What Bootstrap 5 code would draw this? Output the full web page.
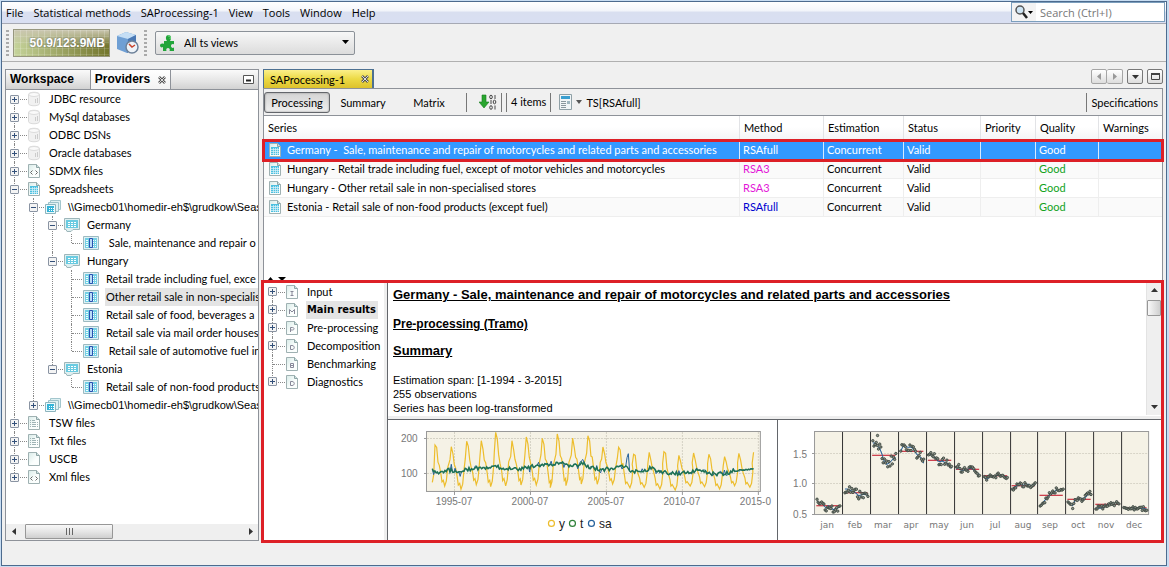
<!DOCTYPE html>
<html lang="en">
<head>
<meta charset="utf-8">
<meta name="viewport" content="width=device-width, initial-scale=1">
<title>SAProcessing-1</title>
<link href="https://cdn.jsdelivr.net/npm/bootstrap@5.3.0/dist/css/bootstrap.min.css" rel="stylesheet">
<style>
:root{--ui:Lato,"DejaVu Sans Condensed",sans-serif;--edge:#8e9299;--face:#f0f0f0;--mark:#dd2027}
body{font:11px/18px var(--ui);color:#000;background:#c8ddf2;padding:1px 2px 1px 1px;min-height:100vh;display:flex}
button{font:inherit;color:inherit;background:none;border:0;padding:0;line-height:1}
svg{display:block;flex:none}
a{color:inherit;text-decoration:none}
.app-window{border:1px solid #4d6b8e;background:var(--face);min-width:0}
/* menu */
.menu-bar{height:22px;background:linear-gradient(#fff 0,#f4f6fb 40%,#d9dff0 50%,#d9dff2 100%);border-bottom:1px solid #a6a9b4;padding-left:4px}
.menu-bar nav{font:11px/20px "Open Sans",sans-serif;gap:10px;padding-top:1px}
.search-box{width:154px;height:20px;border:1px solid #7b9ebd;background:#fff;margin-right:1px}
.search-box input{border:0;outline:0;font:11px "Open Sans",sans-serif;width:120px;height:16px;padding:0 0 0 4px}
.search-box input::placeholder{color:#777;opacity:1}
.search-box .lens{background:#f3f3f3;width:24px;padding-left:2px}
/* tool bar */
.tool-bar{height:38px;border-bottom:1px solid #b0b0b0;padding:0 4px}
.grip{width:3px;height:26px;background:repeating-linear-gradient(#aaa 0 2px,transparent 2px 4px)}
.memory{width:97px;height:28px;border:1px solid #97977f;color:#fff;font:bold 12px/26px "Liberation Sans",sans-serif;text-align:right;padding-right:4px;text-shadow:0 0 2px #555;
background:repeating-linear-gradient(90deg,#fff3 0 1px,transparent 1px 6px),repeating-linear-gradient(#fff2 0 1px,transparent 1px 6px),linear-gradient(#cac6b0,#cac6b000 60%),linear-gradient(90deg,#c5d39a,#73762c)}
.view-box{width:200px;height:24px;border:1px solid #8b9198;border-radius:2px;background:linear-gradient(#f7f7f7,#dcdcdc)}
.view-box select{appearance:none;border:0;background:none;font:11px var(--ui);color:#000;padding:0 0 0 8px;outline:0}
/* docks */
.docks{padding:7px 3px 0}
.dock-left{width:254px;border:1px solid var(--edge);background:#fff}
.tab-strip{height:20px;background:linear-gradient(#fafafa,#e4e4e4 60%,#d2d2d2);border-bottom:1px solid var(--edge);font:bold 12px/19px "Liberation Sans",sans-serif}
.tab-strip .nav-tab{border-right:1px solid var(--edge);padding:0 4px}
.tab-strip .nav-tab.on{background:linear-gradient(#fff,#f2f2f2)}
.doc-tab{width:111px;height:19px;border:1px solid #4d7091;border-bottom:0;border-right-width:2px;background:linear-gradient(#fbf08a,#ecd944 50%,#ddc22c);padding:0 3px 0 6px;line-height:19px}
.nav-btn{height:15px;width:16px;border:1px solid #777;border-radius:2px;background:linear-gradient(#fff,#ddd)}
.nav-btn.off{border-color:#a5a5a5}
.doc-pane{border:1px solid var(--edge);border-bottom:0;background:#fff}
.doc-tools{height:27px;background:var(--face);border-bottom:1px solid var(--edge)}
.doc-tools button.tg{width:66px;height:21px;border-radius:3px}
.doc-tools button.tg.on{border:1px solid #63666b;background:linear-gradient(#d4d4d4,#efefef);box-shadow:inset 0 0 2px #888}
.rule{width:1px;height:19px;background:#777}
/* tree */
.tree,.tree ul{list-style:none;margin:0;padding:0}
.tree ul{margin-left:19px}
.tree li{position:relative}
.tree li::before{content:"";position:absolute;left:4px;top:0;bottom:0;border-left:1px dotted #888}
.tree>li:first-child::before{top:9px}
.tree li:last-child::before{bottom:auto;height:9px}
.node{position:relative;display:flex;align-items:center;height:18px;white-space:nowrap}
.node::before{content:"";position:absolute;left:5px;width:12px;top:9px;border-top:1px dotted #888}
.node .ex{width:9px;height:9px;border:1px solid #8a94a3;border-radius:1px;position:relative;flex:none;background:linear-gradient(90deg,#33507a,#33507a) center/5px 1px no-repeat,#f4f4f4}
.node .ex.plus{background:linear-gradient(#33507a,#33507a) center/5px 1px no-repeat,linear-gradient(#33507a,#33507a) center/1px 5px no-repeat,#f4f4f4}
.node .lf{width:9px;flex:none}
.node svg{margin-left:7px;position:relative}
.node .tx{margin-left:6px;padding:0 1px;flex:1 0 auto}
.node .tx.sel{background:#e4e4e4}
.node .tx.fw-bold{font-family:"DejaVu Sans Condensed",sans-serif;padding-right:2px}
.node .tx.pre{white-space:pre}
.node .tx.path{font-family:"Liberation Sans",sans-serif;padding-right:0}
/* scroll bars */
.sb{background:#efefef}
.sb-h{height:16px}
.sb-v{width:15px;border-left:1px solid #e3e3e3}
.sb button{display:flex;align-items:center;justify-content:center;width:15px;height:15px}
.thumb{border:1px solid #979797;border-radius:1px;background:linear-gradient(#f8f8f8,#e6e6e6 50%,#cfcfcf)}
.sb-h .thumb{width:88px;height:15px;margin-left:4px}
.sb-v .thumb{height:16px;margin-top:2px;background:linear-gradient(90deg,#f8f8f8,#cfcfcf)}
/* series table */
.series{table-layout:fixed;width:100%;margin:0;border-collapse:separate;border-spacing:0;line-height:18px}
.series th{font-weight:400;height:25px;padding:0 4px;background:linear-gradient(#fff 45%,#f3f4f6);border-right:1px solid #e2e3e6;border-bottom:1px solid #d8d8d8;white-space:nowrap}
.series td{height:19px;padding:0 4px 0 3px;border-right:1px solid #eee;border-bottom:1px solid #eee;white-space:nowrap}
.series th:last-child,.series td:last-child{border-right:0}
.series tr:nth-child(even) td{background:#fafafa}
.series tr.cur td{background:#3399ff;color:#fff;border-color:#3399ff #d6eaff #3399ff}
.series tr.cur{outline:3px solid var(--mark);outline-offset:-1px;position:relative}
.series svg{margin:0 4px 0 0}
.mg{color:#e316d8}.bl{color:#0000d0}.gn{color:#12a31c}
/* result box */
.result-box{border:3px solid var(--mark);margin:0 -2px -2px -3px;background:#fff}
.result-tree{width:124px;border-right:1px solid #63666b;box-shadow:inset -3px 0 #eee}
.report{padding:4px 5px 0;font:11px/14px "Liberation Sans",sans-serif}
.report h1,.report h2{font-weight:700;text-decoration:underline;line-height:16px}
.report h1{font-size:13px;margin:0 0 13px}
.report h2{font-size:12px;margin:0 0 11px}
.report h2.big{font-size:13px;margin-bottom:14px}
.charts{border-top:1px solid #63666b;box-shadow:0 -3px #eee}
.charts>div{flex:1 1 0;min-width:0}
.charts>div:first-child{flex-grow:1.015}
.charts>div+div{border-left:1px solid #63666b}
.charts svg{width:100%;height:auto}
.ax{font:10px "Liberation Sans",sans-serif;fill:#777}
.mo{font:9px "DejaVu Sans",sans-serif;fill:#777;text-anchor:middle}
.lg{font:12px "Liberation Sans",sans-serif;fill:#222}
.status{height:24px}
</style>
</head>
<body>
<svg width="0" height="0" class="position-absolute" aria-hidden="true">
<defs>
<linearGradient id="pg" x2="1" y2="1"><stop offset="0" stop-color="#d8ebe8"/><stop offset=".6" stop-color="#fbfefd"/></linearGradient>
<symbol id="page" viewBox="0 0 16 16"><path d="M2.500 1.500h8l3 3v10h-11z" fill="url(#pg)" stroke="#9fb1b2"/><path d="M10.500 1.500v3h3" fill="#cfe4e2" stroke="#8fa5a6"/></symbol>
<symbol id="db" viewBox="0 0 16 16"><path d="M2.500 3.500c0-3 11-3 11 0v9c0 3-11 3-11 0z" fill="#f1f1f1" stroke="#dadada"/><ellipse cx="8" cy="3.500" rx="5" ry="2" fill="#fafafa" stroke="#dcdcdc"/><path d="M9.500 8v4M11.500 7v5" stroke="#ccc"/></symbol>
<symbol id="xml" viewBox="0 0 16 16"><use href="#page"/><path d="M6.500 7.500l-2 2 2 2M9.500 7.500l2 2-2 2" fill="none" stroke="#666"/></symbol>
<symbol id="txt" viewBox="0 0 16 16"><use href="#page"/><path d="M4 5.500h5M4 7.500h8M4 9.500h8M4 11.500h8" stroke="#9fb3b5" stroke-dasharray="1 1 4 1"/></symbol>
<symbol id="sheet" viewBox="0 0 16 16"><use href="#page"/><path d="M4 5h8v8H4z" fill="#4cc0e0"/><path d="M4 7.500h8M4 9.500h8M4 11.500h8M6.500 6v7M8.500 6v7M10.500 6v7" stroke="#fff" stroke-width=".7" opacity=".8"/></symbol>
<symbol id="books" viewBox="0 0 16 16"><path d="M5.500 1.500h10v9h-10z" fill="#dff1f3" stroke="#a3c6cd"/><path d="M3.500 3.500h10v9h-10z" fill="#dff1f3" stroke="#9dc2ca"/><path d="M.5 5.500h10v9H.5z" fill="#eafafd" stroke="#8db4bd"/><path d="M2 7h7v6H2z" fill="#35b4d8"/><path d="M4 9h1v1H4zM6 9h1v1H6zM4 11h1v1H4zM6 11h1v1H6zM8 9h1v1H8zM8 11h1v1H8z" fill="#fff"/></symbol>
<symbol id="tab" viewBox="0 0 16 16"><path d="M.5 1.500h15v11H9l-2 2H3l-1-2H.5z" fill="#dfeff0" stroke="#9db6ba"/><path d="M2 3h12v8H2z" fill="#6acbe1"/><path d="M4 5.500h9M4 7.500h9M4 9.500h9" stroke="#fff" stroke-dasharray="2 1"/></symbol>
<symbol id="ser" viewBox="0 0 16 16"><path d="M.5 1.500h15v13H.5z" fill="#dff0f4" stroke="#9cbac1"/><path d="M2 3h12v10H2z" fill="#74d0e4"/><path d="M3 5.500h10M3 7.500h10M3 9.500h10M3 11.500h10" stroke="#f4ffff" stroke-dasharray="2 1"/><path d="M6.500 3.500h3v9h-3z" fill="#b9dcf6" stroke="#2a50b0"/></symbol>
<symbol id="pI" viewBox="0 0 16 16"><use href="#page"/><path d="M6.500 7.500h3M8 7.500v4M6.500 11.500h3" stroke="#889" fill="none"/></symbol>
<symbol id="pM" viewBox="0 0 16 16"><use href="#page"/><path d="M5.500 12V7.500L8 10l2.500-2.500V12" stroke="#889" fill="none"/></symbol>
<symbol id="pP" viewBox="0 0 16 16"><use href="#page"/><path d="M6.500 12V7.500h2c2 0 2 2.500 0 2.500h-2" stroke="#889" fill="none"/></symbol>
<symbol id="pD" viewBox="0 0 16 16"><use href="#page"/><path d="M6.500 7.500H8c3 0 3 4 0 4H6.500z" stroke="#889" fill="none"/></symbol>
<symbol id="pB" viewBox="0 0 16 16"><use href="#page"/><path d="M6.500 7.500h3v4h-3zM6.500 9.500h3" stroke="#889" fill="none"/></symbol>
<symbol id="cross" viewBox="0 0 8 8"><path d="M1 1l6 6M7 1L1 7" stroke="#555" stroke-width="2.600"/><path d="M1 1l6 6M7 1L1 7" stroke="#fff" stroke-width=".8"/></symbol>
</defs></svg>

<div class="app-window d-flex flex-column flex-grow-1">
  <header class="menu-bar d-flex justify-content-between">
    <nav class="d-flex" aria-label="Main menu"><a href="#">File</a><a href="#">Statistical methods</a><a href="#">SAProcessing-1</a><a href="#">View</a><a href="#">Tools</a><a href="#">Window</a><a href="#">Help</a></nav>
    <form class="search-box d-flex align-items-center" role="search">
      <span class="lens d-flex align-items-center h-100"><svg width="20" height="16" viewBox="0 0 20 16" aria-hidden="true"><circle cx="6" cy="6" r="4" fill="#cfe6f5" stroke="#555" stroke-width="1.500"/><path d="M9 9l4 5" stroke="#222" stroke-width="2.500"/><path d="M14 7h5l-2.500 3z"/></svg></span>
      <input type="text" placeholder="Search (Ctrl+I)" aria-label="Search">
    </form>
  </header>

  <div class="tool-bar d-flex align-items-center">
    <span class="grip"></span>
    <button class="memory ms-1" type="button">50.9/123.9MB</button>
    <button class="ms-1" type="button" aria-label="Profile"><svg width="26" height="26" viewBox="0 0 26 26" aria-hidden="true"><path d="M3 6l9-4 10 3v12l-9 6-10-4z" fill="#6f9fd4"/><path d="M3 6l9-4 10 3-8 4z" fill="#c5def5"/><path d="M14 9l8-4v12l-9 6z" fill="#4a78b4"/><circle cx="18" cy="17" r="6" fill="#eef3f8" stroke="#6d8199" stroke-width="1.500"/><path d="M15 14l3 3 3-2" fill="none" stroke="#c9442c" stroke-width="1.500"/></svg></button>
    <span class="grip ms-1 me-2"></span>
    <label class="view-box d-flex align-items-center">
      <svg class="ms-1" width="16" height="16" viewBox="0 0 16 16" aria-hidden="true"><path d="M4 6h3c-2-3-1-6 1.500-6S12 3 10 6h4v3.500c-1.500-1-3 0-3 1.500s1.500 2.500 3 1.500V16H9.500c1-2-.5-3-1.500-3s-2.500 1-1.500 3H3v-4c-1.500 1-3 0-3-1.500S2 8 4 9z" fill="#22a53a"/><path d="M8 1c2-.5 3 1 2 3" fill="none" stroke="#7be08a"/></svg>
      <select class="flex-grow-1" aria-label="View"><option>All ts views</option></select>
      <svg class="me-1" width="9" height="5" viewBox="0 0 9 5" aria-hidden="true"><path d="M1 0h7L4.500 4z"/></svg>
    </label>
  </div>

  <main class="docks d-flex flex-grow-1 gap-1">
    <aside class="dock-left d-flex flex-column flex-shrink-0 overflow-hidden">
      <div class="tab-strip d-flex">
        <div class="nav-tab pe-3"><a href="#">Workspace</a></div>
        <div class="nav-tab on d-flex align-items-center gap-1"><a href="#" class="me-1">Providers</a><button type="button" aria-label="Close Providers"><svg width="8" height="8"><use href="#cross"/></svg></button></div>
        <button type="button" class="ms-auto me-1 my-auto" aria-label="Minimise"><svg width="11" height="9"><path d="M.5.500h10v8H.5z" fill="#fff" stroke="#555"/><path d="M3 5.500h5" stroke="#222" stroke-width="2"/></svg></button>
      </div>
      <ul class="tree ps-1 flex-grow-1">
        <li><div class="node"><button class="ex plus" aria-label="Expand"></button><svg width="16" height="16"><use href="#db"/></svg><span class="tx">JDBC resource</span></div></li>
        <li><div class="node"><button class="ex plus" aria-label="Expand"></button><svg width="16" height="16"><use href="#db"/></svg><span class="tx">MySql databases</span></div></li>
        <li><div class="node"><button class="ex plus" aria-label="Expand"></button><svg width="16" height="16"><use href="#db"/></svg><span class="tx">ODBC DSNs</span></div></li>
        <li><div class="node"><button class="ex plus" aria-label="Expand"></button><svg width="16" height="16"><use href="#db"/></svg><span class="tx">Oracle databases</span></div></li>
        <li><div class="node"><button class="ex plus" aria-label="Expand"></button><svg width="16" height="16"><use href="#xml"/></svg><span class="tx">SDMX files</span></div></li>
        <li><div class="node"><button class="ex" aria-label="Collapse"></button><svg width="16" height="16"><use href="#sheet"/></svg><span class="tx">Spreadsheets</span></div>
          <ul>
            <li><div class="node"><button class="ex" aria-label="Collapse"></button><svg width="16" height="16"><use href="#books"/></svg><span class="tx path">\\Gimecb01\homedir-eh$\grudkow\Seas</span></div>
              <ul>
                <li><div class="node"><button class="ex" aria-label="Collapse"></button><svg width="16" height="16"><use href="#tab"/></svg><span class="tx">Germany</span></div>
                  <ul><li><div class="node"><span class="lf"></span><svg width="16" height="16"><use href="#ser"/></svg><span class="tx pre"> Sale, maintenance and repair o</span></div></li></ul></li>
                <li><div class="node"><button class="ex" aria-label="Collapse"></button><svg width="16" height="16"><use href="#tab"/></svg><span class="tx">Hungary</span></div>
                  <ul>
                    <li><div class="node"><span class="lf"></span><svg width="16" height="16"><use href="#ser"/></svg><span class="tx">Retail trade including fuel, exce</span></div></li>
                    <li><div class="node"><span class="lf"></span><svg width="16" height="16"><use href="#ser"/></svg><span class="tx sel">Other retail sale in non-specialis</span></div></li>
                    <li><div class="node"><span class="lf"></span><svg width="16" height="16"><use href="#ser"/></svg><span class="tx">Retail sale of food, beverages a</span></div></li>
                    <li><div class="node"><span class="lf"></span><svg width="16" height="16"><use href="#ser"/></svg><span class="tx">Retail sale via mail order houses</span></div></li>
                    <li><div class="node"><span class="lf"></span><svg width="16" height="16"><use href="#ser"/></svg><span class="tx pre"> Retail sale of automotive fuel in</span></div></li>
                  </ul></li>
                <li><div class="node"><button class="ex" aria-label="Collapse"></button><svg width="16" height="16"><use href="#tab"/></svg><span class="tx">Estonia</span></div>
                  <ul><li><div class="node"><span class="lf"></span><svg width="16" height="16"><use href="#ser"/></svg><span class="tx">Retail sale of non-food products</span></div></li></ul></li>
              </ul></li>
            <li><div class="node"><button class="ex plus" aria-label="Expand"></button><svg width="16" height="16"><use href="#books"/></svg><span class="tx path">\\Gimecb01\homedir-eh$\grudkow\Seas</span></div></li>
          </ul></li>
        <li><div class="node"><button class="ex plus" aria-label="Expand"></button><svg width="16" height="16"><use href="#txt"/></svg><span class="tx">TSW files</span></div></li>
        <li><div class="node"><button class="ex plus" aria-label="Expand"></button><svg width="16" height="16"><use href="#txt"/></svg><span class="tx">Txt files</span></div></li>
        <li><div class="node"><button class="ex plus" aria-label="Expand"></button><svg width="16" height="16"><use href="#page"/></svg><span class="tx">USCB</span></div></li>
        <li><div class="node"><button class="ex plus" aria-label="Expand"></button><svg width="16" height="16"><use href="#xml"/></svg><span class="tx">Xml files</span></div></li>
      </ul>
      <div class="sb sb-h d-flex">
        <button type="button" aria-label="Scroll left"><svg width="4" height="7"><path d="M4 0v7L0 3.500z" fill="#333"/></svg></button>
        <div class="thumb d-flex align-items-center justify-content-center"><svg width="9" height="7"><path d="M1.500 0v7M4.500 0v7M7.500 0v7" stroke="#666"/></svg></div>
        <button type="button" class="ms-auto" aria-label="Scroll right"><svg width="4" height="7"><path d="M0 0v7l4-3.500z" fill="#333"/></svg></button>
      </div>
    </aside>

    <section class="d-flex flex-column flex-grow-1" style="min-width:0">
      <div class="d-flex justify-content-between">
        <div class="doc-tab d-flex align-items-center justify-content-between"><a href="#">SAProcessing-1</a><button type="button" aria-label="Close SAProcessing-1"><svg width="8" height="8"><use href="#cross"/></svg></button></div>
        <div class="d-flex gap-1">
          <div class="d-flex">
            <button class="nav-btn off d-flex align-items-center justify-content-center" aria-label="Previous"><svg width="4" height="7"><path d="M4 0v7L0 3.500z" fill="#999"/></svg></button>
            <button class="nav-btn off border-start-0 d-flex align-items-center justify-content-center" aria-label="Next"><svg width="4" height="7"><path d="M0 0v7l4-3.500z" fill="#999"/></svg></button>
          </div>
          <button class="nav-btn d-flex align-items-center justify-content-center" aria-label="Documents"><svg width="7" height="4"><path d="M0 0h7L3.500 4z" fill="#333"/></svg></button>
          <button class="nav-btn d-flex align-items-center justify-content-center" aria-label="Maximise"><svg width="9" height="7"><path d="M.5 1h8v5.500h-8z" fill="none" stroke="#444"/><path d="M0 1h9" stroke="#444" stroke-width="2"/></svg></button>
        </div>
      </div>
      <div class="doc-pane d-flex flex-column flex-grow-1">
        <div class="doc-tools d-flex align-items-center">
          <button class="tg on" type="button">Processing</button>
          <button class="tg" type="button">Summary</button>
          <button class="tg" type="button">Matrix</button>
          <span class="rule ms-1 me-2"></span>
          <button class="ms-1" type="button" aria-label="Refresh"><svg width="18" height="16" viewBox="0 0 18 16"><path d="M3 1h4v7h3l-5 6-5-6h3z" fill="#2aa52f" stroke="#157d1c" stroke-width=".6"/><g fill="none" stroke="#333" stroke-width=".9"><ellipse cx="12" cy="3" rx="1.300" ry="1.800"/><path d="M16 1v4M12 6v4M16 11.500v4"/><ellipse cx="15.500" cy="8" rx="1.300" ry="1.800"/><ellipse cx="12" cy="13.500" rx="1.300" ry="1.800"/></g></svg></button>
          <span class="rule ms-1"></span><span class="rule ms-1 me-1"></span>
          <span>4 items</span><span class="rule ms-1 me-2"></span>
          <svg width="13" height="16" viewBox="0 0 13 16" aria-hidden="true"><path d="M.5.500h12v15H.5z" fill="#f1f5f6" stroke="#8fa0a6"/><path d="M2 2h9v3H2z" fill="#3b9fd0"/><path d="M2 7.500h5M2 9.500h5M2 11.500h5M2 13.500h5" stroke="#8a979d"/><path d="M8 7h3v3H8z" fill="#9fb6bf"/></svg>
          <button class="ms-1 d-flex align-items-center gap-1" type="button"><svg width="6" height="4"><path d="M0 0h6L3 4z" fill="#555"/></svg>TS[RSAfull]</button>
          <span class="rule ms-auto me-1"></span><button class="me-1" type="button">Specifications</button>
        </div>
        <table class="series">
          <colgroup><col><col width="84"><col width="80"><col width="77"><col width="55"><col width="63"><col width="63"></colgroup>
          <thead><tr><th>Series</th><th>Method</th><th>Estimation</th><th>Status</th><th>Priority</th><th>Quality</th><th>Warnings</th></tr></thead>
          <tbody>
            <tr class="cur"><td><div class="d-flex align-items-center"><svg width="16" height="16"><use href="#sheet"/></svg>Germany - &nbsp;Sale, maintenance and repair of motorcycles and related parts and accessories</div></td><td>RSAfull</td><td>Concurrent</td><td>Valid</td><td></td><td>Good</td><td></td></tr>
            <tr><td><div class="d-flex align-items-center"><svg width="16" height="16"><use href="#sheet"/></svg>Hungary - Retail trade including fuel, except of motor vehicles and motorcycles</div></td><td class="mg">RSA3</td><td>Concurrent</td><td>Valid</td><td></td><td class="gn">Good</td><td></td></tr>
            <tr><td><div class="d-flex align-items-center"><svg width="16" height="16"><use href="#sheet"/></svg>Hungary - Other retail sale in non-specialised stores</div></td><td class="mg">RSA3</td><td>Concurrent</td><td>Valid</td><td></td><td class="gn">Good</td><td></td></tr>
            <tr><td><div class="d-flex align-items-center"><svg width="16" height="16"><use href="#sheet"/></svg>Estonia - Retail sale of non-food products (except fuel)</div></td><td class="bl">RSAfull</td><td>Concurrent</td><td>Valid</td><td></td><td class="gn">Good</td><td></td></tr>
          </tbody>
        </table>
        <svg class="mt-auto ms-1" width="20" height="3" aria-hidden="true"><path d="M0 3l2.500-3L5 3zM10 0h8l-4 4z"/></svg>
        <div class="result-box d-flex">
          <ul class="tree result-tree flex-shrink-0 ps-1">
            <li><div class="node"><button class="ex plus" aria-label="Expand"></button><svg width="16" height="16"><use href="#pI"/></svg><span class="tx">Input</span></div></li>
            <li><div class="node"><button class="ex plus" aria-label="Expand"></button><svg width="16" height="16"><use href="#pM"/></svg><span class="tx sel fw-bold flex-grow-0">Main results</span></div></li>
            <li><div class="node"><button class="ex plus" aria-label="Expand"></button><svg width="16" height="16"><use href="#pP"/></svg><span class="tx">Pre-processing</span></div></li>
            <li><div class="node"><button class="ex plus" aria-label="Expand"></button><svg width="16" height="16"><use href="#pD"/></svg><span class="tx">Decomposition</span></div></li>
            <li><div class="node"><span class="lf"></span><svg width="16" height="16"><use href="#pB"/></svg><span class="tx">Benchmarking</span></div></li>
            <li><div class="node"><button class="ex plus" aria-label="Expand"></button><svg width="16" height="16"><use href="#pD"/></svg><span class="tx">Diagnostics</span></div></li>
          </ul>
          <div class="flex-grow-1 d-flex flex-column" style="min-width:0">
            <div class="d-flex flex-grow-1 pb-1">
              <article class="report flex-grow-1">
                <h1>Germany - Sale, maintenance and repair of motorcycles and related parts and accessories</h1>
                <h2>Pre-processing (Tramo)</h2>
                <h2 class="big">Summary</h2>
                <p class="mb-0">Estimation span: [1-1994 - 3-2015]<br>255 observations<br>Series has been log-transformed</p>
              </article>
              <div class="sb sb-v d-flex flex-column">
                <button type="button" aria-label="Scroll up"><svg width="7" height="4"><path d="M0 4h7L3.500 0z" fill="#333"/></svg></button>
                <div class="thumb"></div>
                <button type="button" class="mt-auto" aria-label="Scroll down"><svg width="7" height="4"><path d="M0 0h7L3.500 4z" fill="#333"/></svg></button>
              </div>
            </div>
            <div class="charts d-flex">
              <div><svg id="lines" viewBox="0 0 389 120" role="img" aria-label="Series y, t and sa"></svg></div>
              <div><svg id="months" viewBox="0 0 383 120" role="img" aria-label="Seasonal component by month"></svg></div>
            </div>
          </div>
        </div>
      </div>
    </section>
  </main>
  <footer class="status"></footer>
</div>

<script>
// small repeatable noise in -1..1
const noise = n => { const v = Math.sin(n * 127.1 + 3) * 43758.5; return (v - Math.floor(v)) * 2 - 1; };
const lerp = (pts, x) => { for (let i = 1; i < pts.length; i++) if (x <= pts[i][0]) { const [a, b] = pts[i - 1], [c, d] = pts[i]; return b + (d - b) * (x - a) / (c - a); } return pts[pts.length - 1][1]; };

// time series chart: x is month position, y is plot height, both in thirds of a unit
(() => {
  const X = x => (x / 3).toFixed(1), Y = y => (y / 3 - 5).toFixed(1);
  const peaks = [[141,90],[190,95],[236,79],[280,77],[323,52],[372,77],[415,66],[463,70],[508,57],[554,69],[600,62],[645,96],[692,97],[737,118],[784,112],[828,110],[873,121],[917,114],[963,118],[1010,125],[1053,115],[1097,112]];
  const lows = [[170,213],[219,223],[265,209],[308,215],[353,213],[399,210],[445,210],[487,218],[534,212],[580,207],[628,208],[674,207],[726,218],[769,217],[816,222],[862,225],[907,213],[950,215],[995,222],[1040,212],[1086,217]];
  const y = [[133,202],[137,180]];
  peaks.forEach(([px, py], i) => {
    y.push([px, py]);
    const l = lows[i]; if (!l) return;
    const h = l[1] - py;
    y.push([px + 5, py + h * (.12 + .1 * noise(i))], [px + 9, py + h * .42], [px + 13, py + h * (.5 + .1 * noise(i + 40))], [px + 18, py + h * .72], [px + 21, py + h * .9], [px + 25, py + h * .86], l, [l[0] + 5, l[1] - h * .12], [l[0] + 9, l[1] - h * .45], [peaks[i + 1][0] - 4, (l[1] + peaks[i + 1][1]) / 2 - 20]);
  });
  const t = [[133,165],[150,172],[180,165],[210,168],[260,160],[320,155],[350,160],[400,162],[430,155],[470,148],[520,145],[545,153],[585,146],[610,158],[640,165],[680,160],[718,152],[728,168],[760,172],[790,158],[820,172],[860,176],[900,173],[940,163],[960,176],[1000,177],[1040,168],[1097,161]];
  const tl = [], sl = [];
  for (let i = 0; i < 255; i++) {
    const x = 133 + i * 3.795, b = lerp(t, x), n = noise(i);
    const calm = x > 1040 ? .3 : 1;
    tl.push([x, b + n * 6 * calm]);
    let s = b + n * 6 * calm + (Math.abs(noise(i + 500)) > .85 ? noise(i + 700) * 14 * calm : 0);
    if (x > 714 && x < 724) s = 105 + Math.abs(x - 720) * 9;
    if (x > 576 && x < 588) s = 130 + (588 - x);
    sl.push([x, s]);
  }
  const poly = (a, c, w) => `<polyline points="${a.map(p => X(p[0]) + ',' + Y(p[1])).join(' ')}" fill="none" stroke="${c}" stroke-width="${w}"/>`;
  let s = '<rect x="38.500" y="11.500" width="334" height="60" fill="#f5f2e6" stroke="#999"/><g stroke="#d4d1c4" stroke-dasharray="2 1">';
  [66.5,142.5,218.5,294.5,370.5].forEach(x => s += `<path d="M${x} 12v59"/>`);
  s += '<path d="M39 18.500h333M39 53.500h333"/></g>' + poly(y, '#edbd2c', 1.2) + poly(sl, '#24619c', 1) + poly(tl, '#1f7355', 1.5);
  s += '<g class="ax"><text x="13" y="22">200</text><text x="13" y="57">100</text>';
  ['1995-07','2000-07','2005-07','2010-07'].forEach((d, i) => s += `<text x="${66 + i * 76}" y="85" text-anchor="middle">${d}</text>`);
  s += '<text x="352" y="85">2015-0</text></g><path d="M36 18.500h3M36 53.500h3M66.500 72v3M142.500 72v3M218.500 72v3M294.500 72v3M370.500 72v3" stroke="#999"/>';
  s += '<g fill="none" stroke-width="1.200"><circle cx="163.500" cy="103.500" r="3" stroke="#edbd2c"/><circle cx="184.500" cy="103.500" r="3" stroke="#2e8038"/><circle cx="203.500" cy="103.500" r="3" stroke="#24619c"/></g><g class="lg"><text x="171" y="108">y</text><text x="192" y="108">t</text><text x="211" y="108">sa</text></g>';
  document.getElementById('lines').innerHTML = s;
})();

// one strip per month: the trend heights, the mean line and the scatter
(() => {
  const m = [
    ['jan',272,9,[258,266,260,272,280,272,276,284,280,280,273]],
    ['feb',233,14,[222,222,225,228,230,236,242,240,238,239,241]],
    ['mar',121,15,[84,84,92,100,118,140,148,144,138,130,128]],
    ['apr',109,14,[108,94,92,97,96,98,108,118,122,130,145]],
    ['may',136,11,[116,120,124,128,138,140,138,142,144,152,160]],
    ['jun',163,7,[163,155,165,166,163,162,160,162,168,174,178]],
    ['jul',182,6,[188,193,188,182,184,183,180,180,182,184,186]],
    ['aug',212,7,[224,216,213,210,208,210,208,208,212,210,210]],
    ['sep',241,7,[274,264,256,248,240,236,232,224,226,226,226]],
    ['oct',253,9,[263,265,272,256,254,254,250,250,244,234,240]],
    ['nov',268,7,[278,280,280,276,274,270,265,264,266,263,266]],
    ['dec',278,7,[276,282,282,278,280,278,278,280,280,280,284]]];
  const X = x => (x / 3 - 3).toFixed(1), Y = y => (y / 3 - 5).toFixed(1);
  let s = '<rect x="36.500" y="11.500" width="334" height="83" fill="#f5f2e6" stroke="#999"/><path d="M37 33.500h333M37 63.500h333" stroke="#d8d5c8" stroke-dasharray="2 1"/>';
  m.forEach(([name, mean, sc, v], k) => {
    const x0 = 118 + k * 83.65;
    const xs = i => x0 + 8 + i * 3.45, at = i => v[Math.floor(i / 2)] * (1 - i % 2 / 2) + (v[Math.floor(i / 2) + 1] ?? v[10]) * (i % 2 / 2);
    s += `<path d="M${X(x0 + 6)} ${Y(mean)}H${X(x0 + 76)}" stroke="#c9303f" stroke-width="1.200"/><polyline fill="none" stroke="#24619c" points="${Array.from({length: 21}, (_, i) => X(xs(i)) + ',' + Y(at(i))).join(' ')}"/>`;
    for (let i = 0; i < 21; i++) s += `<circle cx="${X(xs(i))}" cy="${Y(at(i) + sc * noise(i * 2 + k * 53))}" r="1.200" fill="#8d9488" stroke="#3b4540" stroke-width=".9"/>`;
    if (k) s += `<path d="M${Math.round(x0 / 3 - 3)}.500 12v82" stroke="#333"/>`;
    s += `<text class="mo" x="${Math.round(x0 / 3 + 10)}" y="108">${name}</text>`;
  });
  s += '<circle cx="99.500" cy="15.500" r="1.200" fill="#8d9488" stroke="#3b4540" stroke-width=".9"/><g class="ax" text-anchor="end"><text x="29" y="38">1.5</text><text x="29" y="67">1.0</text><text x="29" y="98">0.5</text></g><path d="M34 33.500h3M34 63.500h3M34 94.500h3" stroke="#999"/>';
  document.getElementById('months').innerHTML = s;
})();
</script>
<script src="https://cdn.jsdelivr.net/npm/bootstrap@5.3.0/dist/js/bootstrap.bundle.min.js"></script>
</body>
</html>
